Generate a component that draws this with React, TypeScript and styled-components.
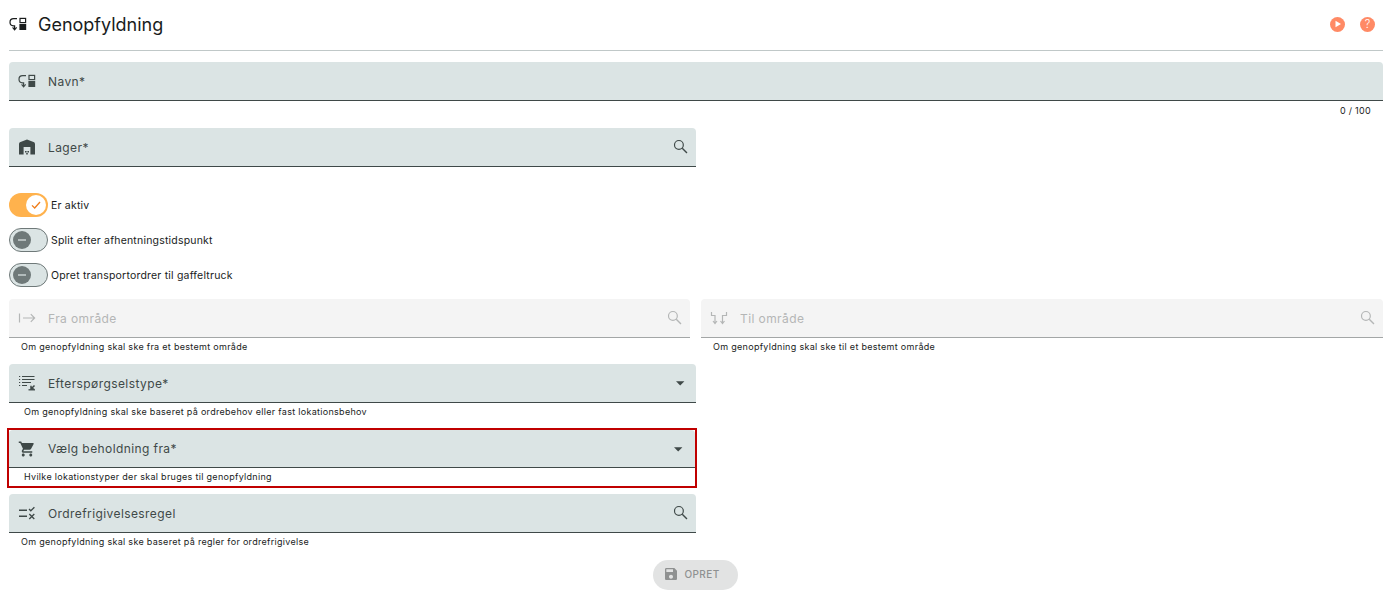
import React from "react";
import styled, { createGlobalStyle } from "styled-components";

const GlobalStyle = createGlobalStyle`
  html, body {
    margin: 0;
    padding: 0;
    background: #fff;
    font-family: Inter, "Liberation Sans", sans-serif;
    color: #191c1c;
  }
`;

const Page = styled.div`
  padding: 0 9px;
  width: 1374px;
`;

const Header = styled.header`
  padding-bottom: 2px;
  height: 48px;
  display: flex;
  align-items: center;
  border-bottom: 1px solid #c0c8c8;
  margin-bottom: 11px;
`;

const Title = styled.h1`
  margin: 0 0 0 11px;
  font-size: 18px;
  font-weight: 400;
  flex: 1;
`;

const HeaderActions = styled.div`
  display: flex;
  gap: 15px;
  margin-right: 8px;
`;

const HeaderAction = styled.span`
  width: 15px;
  height: 15px;
  display: flex;
  align-items: center;
  justify-content: center;
  border-radius: 50%;
  background: #ff8a65;
  color: #fff;
  font-size: 11px;
  font-weight: 300;
  svg { display: block; }
`;

const FieldBox = styled.div<{ $disabled?: boolean; $half?: boolean }>`
  height: 39px;
  width: ${({ $half }) => ($half ? "687px" : "auto")};
  display: flex;
  align-items: center;
  padding: 0 8px 0 9px;
  box-sizing: border-box;
  border-radius: 4px 4px 0 0;
  background: ${({ $disabled }) => ($disabled ? "#f4f4f4" : "#dbe4e4")};
  border-bottom: 1px solid ${({ $disabled }) => ($disabled ? "#a3a6a6" : "#3f4948")};
  color: ${({ $disabled }) => ($disabled ? "#b4b6b6" : "#3f4948")};
`;

const FieldIcon = styled.span`
  width: 18px;
  height: 18px;
  display: flex;
  align-items: center;
  justify-content: center;
  margin-right: 12px;
  flex: none;
  svg { display: block; }
`;

const FieldLabel = styled.span`
  flex: 1;
  font-size: 12px;
  letter-spacing: 0.41px;
`;

const TrailingIcon = styled.span`
  width: 16px;
  height: 16px;
  display: flex;
  justify-content: flex-end;
  flex: none;
  svg { display: block; }
`;

const Helper = styled.div<{ $indent?: number }>`
  height: 25px;
  box-sizing: border-box;
  padding: 2px 0 0 ${({ $indent }) => $indent ?? 12}px;
  font-size: 9px;
  line-height: 13px;
  letter-spacing: 0.3px;
  color: #191c1c;
`;

const Counter = styled(Helper)`
  height: 27px;
  text-align: right;
  padding: 3px 12px 0 0;
`;

const Toggles = styled.div`
  margin-top: 26px;
  display: flex;
  flex-direction: column;
  gap: 11px;
  margin-bottom: 12px;
`;

const ToggleRow = styled.div`
  display: flex;
  align-items: center;
  height: 24px;
  font-size: 10.5px;
  letter-spacing: 0.2px;
  color: #191c1c;
`;

const ToggleTrack = styled.span<{ $on?: boolean }>`
  width: 39px;
  height: 24px;
  box-sizing: border-box;
  border-radius: 12px;
  margin-right: 3px;
  display: flex;
  align-items: center;
  justify-content: ${({ $on }) => ($on ? "flex-end" : "flex-start")};
  padding: 0 ${({ $on }) => ($on ? "2px" : "3px")};
  background: ${({ $on }) => ($on ? "#ffb24d" : "#dbe4e4")};
  border: ${({ $on }) => ($on ? "0" : "1px solid #6f7979")};
`;

const ToggleKnob = styled.span<{ $on?: boolean }>`
  width: ${({ $on }) => ($on ? "20px" : "18px")};
  height: ${({ $on }) => ($on ? "20px" : "18px")};
  border-radius: 50%;
  display: flex;
  align-items: center;
  justify-content: center;
  background: ${({ $on }) => ($on ? "#fff" : "#6f7979")};
  svg { display: block; }
`;

const TwoColumns = styled.div`
  display: grid;
  grid-template-columns: 681px 682px;
  gap: 11px;
  margin-bottom: 1px;
`;

const Highlight = styled.div`
  width: 690px;
  height: 60px;
  box-sizing: border-box;
  margin: 0 0 6px -2px;
  border: 2px solid #c00000;
  ${FieldBox} {
    width: auto;
    height: 38px;
    padding-right: 9px;
  }
`;

const HighlightHelper = styled(Helper)`
  height: 18px;
  padding-top: 2px;
  padding-left: 15px;
`;

const Footer = styled.div`
  display: flex;
  justify-content: center;
  margin-top: 2px;
  padding-right: 2px;
`;

const SaveButton = styled.button`
  width: 85px;
  height: 30px;
  border: 0;
  border-radius: 15px;
  padding: 0 5px 2px 0;
  display: flex;
  align-items: center;
  justify-content: center;
  gap: 7px;
  background: #e2e3e3;
  color: #8f9191;
  font: 500 10px Inter, sans-serif;
  letter-spacing: 0.4px;
  svg { display: block; }
`;

const Replenish = () => (
  <svg width="18" height="18" viewBox="0 0 18 18" fill="none" stroke="currentColor" strokeWidth="1.2">
    <path d="M8 3.6H4.6C2.4 3.6 1 5.2 1 7.2c0 2 1.3 3.5 3.4 3.6l1.2.1v3" />
    <path d="M3.6 12.4l2 2.4 2-2.4" />
    <rect x="11" y="3.4" width="5.6" height="4.2" />
    <rect x="10.4" y="9" width="6.8" height="6" fill="currentColor" stroke="none" />
  </svg>
);

const Warehouse = () => (
  <svg width="18" height="18" viewBox="0 0 18 18" fill="currentColor">
    <path d="M1 16.5V6.2C1 5.2 1.6 4.4 2.5 4L9 1.5 15.5 4c.9.4 1.5 1.2 1.5 2.2v10.3h-4.6V9H5.6v7.5z" />
    <path d="M7 13h1.6v1.5H7zM9.4 13H11v1.5H9.4zM8.2 15h1.6v1.5H8.2z" />
  </svg>
);

const Search = () => (
  <svg width="15" height="15" viewBox="0 0 16 16" fill="none" stroke="currentColor" strokeWidth="1.25">
    <circle cx="6.3" cy="6.3" r="4.7" />
    <path d="M9.9 9.9l5 5" strokeWidth="1.5" />
  </svg>
);

const FromArea = () => (
  <svg width="18" height="18" viewBox="0 0 18 18" fill="none" stroke="currentColor" strokeWidth="1.2">
    <path d="M1.5 4.5v9M5 9h11.5M12.8 5.2l3.8 3.8-3.8 3.8" />
  </svg>
);

const ToArea = () => (
  <svg width="18" height="18" viewBox="0 0 18 18" fill="none" stroke="currentColor" strokeWidth="1.2">
    <path d="M1.5 3v3.5H5v7.5M3 12l2 2.5 2-2.5" />
    <path d="M16.5 3v3.5h-4v7.5M10.5 12l2 2.5 2-2.5" />
  </svg>
);

const DemandType = () => (
  <svg width="18" height="18" viewBox="0 0 18 18" fill="none" stroke="currentColor" strokeWidth="1.1">
    <path d="M1 2.5h1.2M4 2.5h12.5M1 5.5h1.2M4 5.5h12.5M1 8.5h1.2M4 8.5h9M1 11.5h1.2M4 11.5h5" />
    <path d="M16.5 11.5l-3 3M13 11.8v3.2h3.2" strokeWidth="1.5" />
    <path d="M10.5 15.8h6.5" strokeWidth="1.3" />
  </svg>
);

const Cart = () => (
  <svg width="20" height="20" viewBox="0 0 24 24" fill="currentColor">
    <path d="M7 18c-1.1 0-1.99.9-1.99 2S5.9 22 7 22s2-.9 2-2-.9-2-2-2zM1 2v2h2l3.6 7.59-1.35 2.45c-.16.28-.25.61-.25.96 0 1.1.9 2 2 2h12v-2H7.42c-.14 0-.25-.11-.25-.25l.03-.12.9-1.63h7.45c.75 0 1.41-.41 1.75-1.03l3.58-6.49c.08-.14.12-.31.12-.48 0-.55-.45-1-1-1H5.21l-.94-2H1zm16 16c-1.1 0-1.99.9-1.99 2s.89 2 1.99 2 2-.9 2-2-.9-2-2-2z" />
  </svg>
);

const RuleIcon = () => (
  <svg width="18" height="18" viewBox="0 0 18 18" fill="none" stroke="currentColor" strokeWidth="1.3">
    <path d="M1 6.3h8M1 12.3h8" strokeWidth="1.5" />
    <path d="M11 5l1.8 1.8 3.6-3.6" />
    <path d="M11.3 10l5 5M16.3 10l-5 5" />
  </svg>
);

const CaretDown = () => (
  <svg width="16" height="16" viewBox="0 0 16 16" fill="currentColor">
    <path d="M4 6.2h8.4L8.2 10.4z" />
  </svg>
);

const Field = ({
  icon,
  label,
  trailing,
  disabled,
  half,
}: {
  icon: React.ReactNode;
  label: string;
  trailing?: React.ReactNode;
  disabled?: boolean;
  half?: boolean;
}) => (
  <FieldBox $disabled={disabled} $half={half}>
    <FieldIcon>{icon}</FieldIcon>
    <FieldLabel>{label}</FieldLabel>
    {trailing && <TrailingIcon>{trailing}</TrailingIcon>}
  </FieldBox>
);

const Toggle = ({ on, label }: { on?: boolean; label: string }) => (
  <ToggleRow>
    <ToggleTrack $on={on}>
      <ToggleKnob $on={on}>
        {on ? (
          <svg width="12" height="12" viewBox="0 0 12 12" fill="none" stroke="#ef7d1a" strokeWidth="1.3">
            <path d="M2 6.4l2.7 2.6L10 3" />
          </svg>
        ) : (
          <svg width="10" height="10" viewBox="0 0 10 10" fill="none" stroke="#c5cccc" strokeWidth="1.6">
            <path d="M1 5h8" />
          </svg>
        )}
      </ToggleKnob>
    </ToggleTrack>
    {label}
  </ToggleRow>
);

export default function App() {
  return (
    <Page>
      <GlobalStyle />
      <Header>
        <Replenish />
        <Title>Genopfyldning</Title>
        <HeaderActions>
          <HeaderAction>
            <svg width="8" height="8" viewBox="0 0 8 8" fill="#fff">
              <path d="M1.5 .8L7 4 1.5 7.2z" />
            </svg>
          </HeaderAction>
          <HeaderAction>?</HeaderAction>
        </HeaderActions>
      </Header>

      <Field icon={<Replenish />} label="Navn*" />
      <Counter>0 / 100</Counter>

      <Field half icon={<Warehouse />} label="Lager*" trailing={<Search />} />

      <Toggles>
        <Toggle on label="Er aktiv" />
        <Toggle label="Split efter afhentningstidspunkt" />
        <Toggle label="Opret transportordrer til gaffeltruck" />
      </Toggles>

      <TwoColumns>
        <div>
          <Field disabled icon={<FromArea />} label="Fra område" trailing={<Search />} />
          <Helper>Om genopfyldning skal ske fra et bestemt område</Helper>
        </div>
        <div>
          <Field disabled icon={<ToArea />} label="Til område" trailing={<Search />} />
          <Helper>Om genopfyldning skal ske til et bestemt område</Helper>
        </div>
      </TwoColumns>

      <Field half icon={<DemandType />} label="Efterspørgselstype*" trailing={<CaretDown />} />
      <Helper $indent={15}>Om genopfyldning skal ske baseret på ordrebehov eller fast lokationsbehov</Helper>

      <Highlight>
        <Field icon={<Cart />} label="Vælg beholdning fra*" trailing={<CaretDown />} />
        <HighlightHelper>Hvilke lokationstyper der skal bruges til genopfyldning</HighlightHelper>
      </Highlight>

      <Field half icon={<RuleIcon />} label="Ordrefrigivelsesregel" trailing={<Search />} />
      <Helper>Om genopfyldning skal ske baseret på regler for ordrefrigivelse</Helper>

      <Footer>
        <SaveButton disabled>
          <svg width="12" height="12" viewBox="3 3 18 18" fill="currentColor">
            <path d="M17 3H5c-1.11 0-2 .9-2 2v14c0 1.1.89 2 2 2h14c1.1 0 2-.9 2-2V7l-4-4zm-5 16c-1.66 0-3-1.34-3-3s1.34-3 3-3 3 1.34 3 3-1.34 3-3 3zm3-10H5V5h10v4z" />
          </svg>
          OPRET
        </SaveButton>
      </Footer>
    </Page>
  );
}
